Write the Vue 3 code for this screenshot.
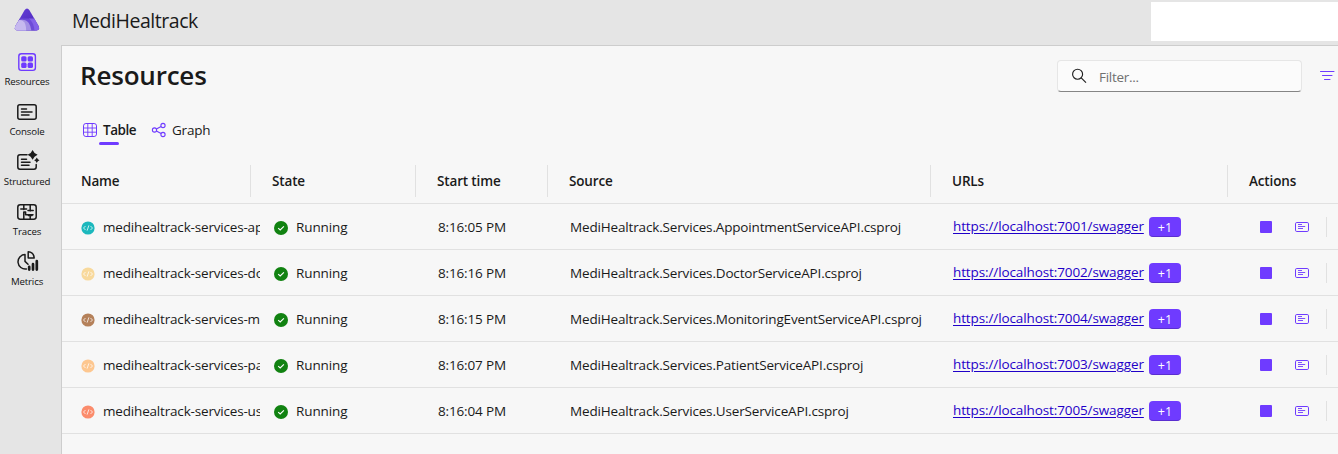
<script setup>
const nav = [
  { label: 'Resources', icon: 'resources' },
  { label: 'Console', icon: 'console' },
  { label: 'Structured', icon: 'structured' },
  { label: 'Traces', icon: 'traces' },
  { label: 'Metrics', icon: 'metrics' },
]
const columns = ['Name', 'State', 'Start time', 'Source', 'URLs', 'Actions']
const rows = [
  { name: 'medihealtrack-services-ap', tone: 'teal', time: '8:16:05 PM', source: 'MediHealtrack.Services.AppointmentServiceAPI.csproj', port: 7001 },
  { name: 'medihealtrack-services-do', tone: 'sand', time: '8:16:16 PM', source: 'MediHealtrack.Services.DoctorServiceAPI.csproj', port: 7002 },
  { name: 'medihealtrack-services-m', tone: 'brown', time: '8:16:15 PM', source: 'MediHealtrack.Services.MonitoringEventServiceAPI.csproj', port: 7004 },
  { name: 'medihealtrack-services-pa', tone: 'peach', time: '8:16:07 PM', source: 'MediHealtrack.Services.PatientServiceAPI.csproj', port: 7003 },
  { name: 'medihealtrack-services-us', tone: 'coral', time: '8:16:04 PM', source: 'MediHealtrack.Services.UserServiceAPI.csproj', port: 7005 },
]
</script>

<template>
  <div class="app">
    <header class="top">
      <svg class="logo" width="26" height="24" viewBox="0 0 26 24">
        <defs>
          <linearGradient id="lg" x1="0" y1="0" x2="1" y2="1">
            <stop offset="0" stop-color="#6540d8" />
            <stop offset="1" stop-color="#4a25b8" />
          </linearGradient>
        </defs>
        <path d="M10.4 2.4Q13-1.6 15.6 2.4L24.6 18Q26.2 22.2 22.8 22.4H3.2Q-.2 22.2 1.4 18Z" fill="url(#lg)" />
        <path d="M6 10.6H14.8Q18.4 12.6 20.4 17.2Q21.6 20.6 21.6 22.4H3.2Q-.2 22.2 1.4 18Z" fill="#6d4cd8" />
        <path d="M14.8 10.6H20.2L24.6 18Q26.2 22.2 22.8 22.4H20.4Q20 15 14.8 10.6Z" fill="#8463e8" />
        <path d="M5.2 12Q11.6 10.8 14.6 14.8Q17 18.4 17.4 22.4H3.2Q-.2 22.2 1.4 18Z" fill="#a491e4" />
        <path d="M5.2 12Q9.6 12 11.2 16Q12.2 19.2 12.2 22.4H3.2Q-.2 22.2 1.4 18Z" fill="#c6b9ef" />
      </svg>
      <span class="brand">MediHealtrack</span>
      <span class="blank"></span>
    </header>

    <div class="body">
      <nav class="side">
        <a v-for="item in nav" :key="item.label" class="nav-item">
          <svg v-if="item.icon === 'resources'" width="24" height="20" viewBox="0 0 24 20" fill="none">
            <rect x="3.8" y="1.8" width="16.6" height="16.6" rx="2.6" stroke="#6f3bff" stroke-width="1.4" />
            <g fill="#6f3bff">
              <rect x="6.2" y="4.2" width="5.4" height="5.4" rx="1.6" /><rect x="12.6" y="4.2" width="5.4" height="5.4" rx="1.6" />
              <rect x="6.2" y="10.6" width="5.4" height="5.4" rx="1.6" /><rect x="12.6" y="10.6" width="5.4" height="5.4" rx="1.6" />
            </g>
          </svg>
          <svg v-else-if="item.icon === 'console'" class="dark" width="24" height="20" viewBox="0 0 24 20">
            <rect x="2.8" y="2.8" width="18.4" height="14.4" rx="2" />
            <path d="M6.5 7H11.5M6.5 10H17M6.5 13H14" />
          </svg>
          <svg v-else-if="item.icon === 'structured'" class="dark" width="24" height="20" viewBox="0 0 24 20" overflow="visible">
            <path d="M12 2.8H5Q2.8 2.8 2.8 5V15Q2.8 17.2 5 17.2H19Q21.2 17.2 21.2 15V12.5M6.5 7.2H11.5M6.5 10.2H15M6.5 13.2H14" />
            <path class="solid" d="M17.6-2Q19 1.6 22.6 2.8Q19 4.2 17.6 7.8Q16.2 4.2 12.6 2.8Q16.2 1.6 17.6-2ZM21.8 5.6Q22.6 7.6 24.5 8.3Q22.6 9 21.8 11Q21 9 19.1 8.3Q21 7.6 21.8 5.6Z" />
          </svg>
          <svg v-else-if="item.icon === 'traces'" class="dark" width="24" height="20" viewBox="0 0 24 20">
            <rect x="2.8" y="2.8" width="18.4" height="14.4" rx="2.4" />
            <path d="M8.8 3V7.5M15.2 3V9M8.8 10V17M15.2 13.4V17M5.8 7H11.6M13 8.6H18.2M8.8 10H10.6V12.8H18M13.4 13.4H17" />
          </svg>
          <svg v-else class="dark" width="24" height="20" viewBox="0 0 24 20" overflow="visible">
            <path d="M10 2.6A7.2 7.2 0 1 0 11.4 16.9M10 2.6V9.4L13 12.2M13.2-.2Q18.8.2 19.2 6H13.2Z" />
            <path class="bar" d="M14.2 14.8V17.6M18 12.2V17.6M21.8 9.2V17.6" />
          </svg>
          <span :class="['nav-label', item.icon]">{{ item.label }}</span>
        </a>
      </nav>

      <main class="panel">
        <div class="head">
          <h1>Resources</h1>
          <div class="filter">
            <svg width="16" height="16" viewBox="0 0 16 16" fill="none" stroke="#1f1f1f" stroke-width="1.15">
              <circle cx="6.6" cy="6.2" r="5" /><path d="M10.2 9.8L15 14.6" />
            </svg>
            <span>Filter...</span>
          </div>
          <svg class="lines" width="16" height="12" viewBox="0 0 16 12" stroke="#6f3bff" stroke-width="1" stroke-linecap="round">
            <path d="M.5 1.5H14M2.5 5.5H12M4.5 9.5H10" />
          </svg>
        </div>

        <div class="tabs">
          <span class="tab active">
            <svg width="16" height="16" viewBox="0 0 16 16" fill="none" stroke="#6f3bff">
              <rect x="1.5" y="1.5" width="13" height="13" rx="2.4" /><path d="M1.5 6H14.5M1.5 10.2H14.5M5.8 1.5V14.5M10.2 1.5V14.5" stroke-width=".9" />
            </svg>
            <span class="tab-text">Table</span>
          </span>
          <span class="tab">
            <svg width="16" height="16" viewBox="0 0 16 16" fill="none" stroke="#6f3bff" stroke-width="1.1">
              <circle cx="3.5" cy="8" r="2.1" /><circle cx="12" cy="3.5" r="2.1" /><circle cx="12" cy="12.5" r="2.1" />
              <path d="M5.4 7L10.1 4.5M5.4 9L10.1 11.5" />
            </svg>
            <span class="tab-text">Graph</span>
          </span>
        </div>

        <div class="grid header">
          <div v-for="c in columns" :key="c" class="th"><span>{{ c }}</span></div>
        </div>
        <div v-for="r in rows" :key="r.port" class="grid row">
          <div class="name">
            <svg :class="['badge', r.tone]" width="14" height="14" viewBox="0 0 14 14">
              <circle cx="7" cy="7" r="6.6" />
              <path d="M4.5 5L2.5 7L4.5 9M9.5 5L11.5 7L9.5 9M7.9 4.4L6.1 9.6" />
            </svg>
            <span class="clip">{{ r.name }}</span>
          </div>
          <div class="state">
            <svg width="14" height="14" viewBox="0 0 14 14" fill="none">
              <circle cx="7" cy="7" r="7" fill="#118211" /><path d="M4.2 7.1L6.2 9L9.9 5.3" stroke="#fff" stroke-width="1.1" />
            </svg>
            <span>Running</span>
          </div>
          <div class="time">{{ r.time }}</div>
          <div class="source">{{ r.source }}</div>
          <div class="urls"><a href="#">https://localhost:{{ r.port }}/swagger</a><span class="more">+1</span></div>
          <div class="actions">
            <i class="stop"></i>
            <svg width="14" height="10" viewBox="0 0 14 10" fill="none" stroke="#6f3bff">
              <rect x=".5" y=".5" width="13" height="9" rx="1.3" /><path d="M3 2.5H7M3 4.5H10.2M3 6.5H8" stroke-width=".9" />
            </svg>
            <i class="sep"></i>
          </div>
        </div>
      </main>
    </div>
  </div>
</template>

<style>
body { margin: 0; overflow: hidden; }
</style>

<style scoped>
.app { width: 1338px; height: 454px; overflow: hidden; display: flex; flex-direction: column; background: #e5e5e5; color: #1a1a1a; font: 13.5px/20px "Open Sans", "Noto Sans", sans-serif; white-space: nowrap; }
.app *, .app { box-sizing: border-box; }
svg { flex: none; display: block; }
.top { height: 45px; flex: none; display: flex; align-items: flex-start; }
.logo { margin: 8px 0 0 14px; }
.brand { margin: 6px 0 0 32px; font-size: 19.5px; line-height: 30px; letter-spacing: -.45px; }
.blank { width: 187px; height: 39px; margin: 2px 0 0 auto; background: #fff; }
.body { flex: 1; display: flex; min-height: 0; }
.side { width: 61px; flex: none; padding-top: 7px; }
.nav-item { width: 54px; height: 50px; display: flex; flex-direction: column; align-items: center; }
.nav-label { font-size: 9.7px; line-height: 14px; margin-top: 3px; color: #111; letter-spacing: -.15px; }
.dark { fill: none; stroke: #1a1a1a; stroke-width: 1.5; stroke-linecap: round; stroke-linejoin: round; }
.dark .solid { fill: #1a1a1a; stroke: none; }
.dark .bar { stroke-width: 2.7; }
.panel { flex: 1; min-width: 0; border: solid #cdcdcd; border-width: 1px 0 0 1px; background: #f7f7f7; }
.head { height: 62px; display: flex; align-items: flex-start; }
h1 { margin: 9px 0 0 18px; font-size: 26px; line-height: 40px; font-weight: 600; width: 151px; letter-spacing: -.2px; }
.filter { margin: 14px 0 0 826px; width: 245px; height: 32px; display: flex; align-items: center; background: #fbfbfb; border: 1px solid #e6e6e6; border-bottom-color: #858585; border-radius: 4px; padding-left: 13px; color: #707070; }
.filter span { margin: 1px 0 0 12px; letter-spacing: -.3px; }
.lines { margin: 24px 0 0 18px; }
.tabs { height: 51px; padding: 12px 0 0 20px; display: flex; gap: 14px; }
.tab { display: flex; align-items: center; height: 20px; gap: 5px; position: relative; }
.tab-text { letter-spacing: -.2px; }
.active { font-weight: 600; }
.active .tab-text { width: 34px; letter-spacing: -.45px; }
.active::after { content: ""; position: absolute; left: 17px; top: 22px; width: 20px; height: 3px; border-radius: 2px; background: #6f3bff; }
.grid { display: grid; grid-template-columns: 189px 165px 132px 383px 297px 110px; border-bottom: 1px solid #e1e1e1; }
.header { height: 45px; padding-top: 6px; font-weight: 600; letter-spacing: -.15px; }
.th { height: 32px; padding: 6px 0 0 19px; border-right: 1px solid #e1e1e1; }
.th + .th { padding-left: 21px; }
.th:last-child { border: 0; }
.row { height: 46px; align-items: center; }
.name, .state, .urls, .actions { display: flex; align-items: center; }
.name { padding: 2px 0 0 19px; width: 198px; }
.clip { margin: -2px 0 0 8px; overflow: hidden; flex: 1; letter-spacing: -.18px; }
.state { padding: 2px 0 0 23px; }
.state span { margin: -2px 0 0 8px; letter-spacing: -.1px; }
.time, .source { padding: 0 0 0 22px; letter-spacing: -.16px; }
.urls { padding: 0 0 0 22px; }
.urls a { color: #1f00c8; width: 191px; margin-top: -1px; letter-spacing: -.11px; text-underline-offset: 2px; }
.more { margin-left: 5px; width: 32px; height: 20px; border-radius: 4px; background: #6f3bff; border-bottom: 1px solid #5a2ed0; color: #fff; font-size: 12.5px; line-height: 21px; text-align: center; }
.actions { padding: 1px 0 0 32px; }
.stop { width: 12px; height: 12px; border-radius: 1px; background: #6f3bff; margin-right: 23px; }
.sep { width: 1px; height: 20px; background: #e1e1e1; margin-left: 17px; }
.badge path { fill: none; stroke: #fff; stroke-opacity: .75; stroke-width: 1; }
.teal { fill: #1cb8bd; }
.sand { fill: #f8d99c; }
.brown { fill: #b5815a; }
.peach { fill: #fdc790; }
.coral { fill: #fb8c6c; }
</style>
